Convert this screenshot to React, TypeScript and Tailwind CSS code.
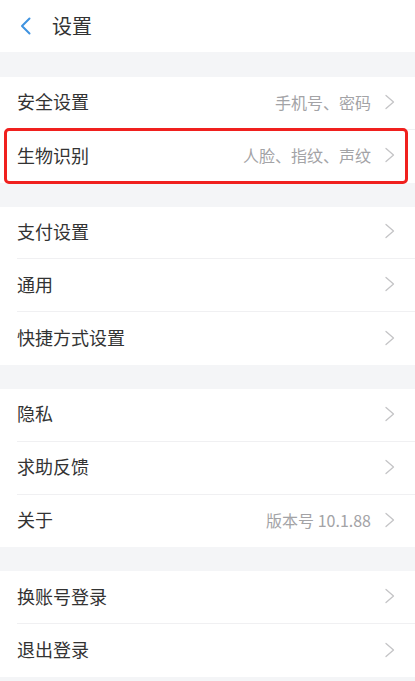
import React from "react";

const Chevron = () => (
  <svg width="12" height="16" viewBox="0 0 12 16" fill="none" className="shrink-0">
    <path d="M2 1.5 L9.5 8 L2 14.5" stroke="#c4c4c6" strokeWidth="1.3" strokeLinecap="round" strokeLinejoin="round" />
  </svg>
);

type Item = { label: string; value?: string; highlight?: boolean };

const Row = ({ item, last }: { item: Item; last: boolean }) => (
  <div className="relative h-[52.8px] pl-[17px]">
    <div className={`flex h-full items-center pb-[2px] pr-[19px] ${last ? "" : "border-b border-[#f0f0f2]"}`}>
      <span className="flex-1 text-[18px] text-[#333333]">{item.label}</span>
      {item.value && <span className="mr-[13px] text-[16px] text-[#a3a3a6]">{item.value}</span>}
      <Chevron />
    </div>
    {item.highlight && (
      <div className="pointer-events-none absolute left-[4px] right-[7px] top-[-2px] bottom-[-1px] rounded-[5px] border-[3px] border-[#f0201e]" />
    )}
  </div>
);

const Section = ({ items }: { items: Item[] }) => (
  <div className="bg-white">
    {items.map((it, i) => (
      <Row key={it.label} item={it} last={i === items.length - 1} />
    ))}
  </div>
);

export default function App() {
  const font = { fontFamily: '"Noto Sans CJK SC", "Noto Sans", sans-serif' };
  return (
    <div className="min-h-[681px] w-[415px] bg-[#f4f5f7]" style={font}>
      <div className="flex h-[52px] items-center bg-white pl-[19px]">
        <svg width="13" height="18" viewBox="0 0 13 18" fill="none">
          <path d="M10.5 1.5 L3 9 L10.5 16.5" stroke="#3f93e0" strokeWidth="2" strokeLinecap="round" strokeLinejoin="round" />
        </svg>
        <span className="ml-[20px] text-[20px] text-[#333333]">设置</span>
      </div>
      <div className="flex flex-col gap-[24px] pt-[25px]">
        <Section
          items={[
            { label: "安全设置", value: "手机号、密码" },
            { label: "生物识别", value: "人脸、指纹、声纹", highlight: true },
          ]}
        />
        <Section items={[{ label: "支付设置" }, { label: "通用" }, { label: "快捷方式设置" }]} />
        <Section items={[{ label: "隐私" }, { label: "求助反馈" }, { label: "关于", value: "版本号 10.1.88" }]} />
        <Section items={[{ label: "换账号登录" }, { label: "退出登录" }]} />
      </div>
    </div>
  );
}
